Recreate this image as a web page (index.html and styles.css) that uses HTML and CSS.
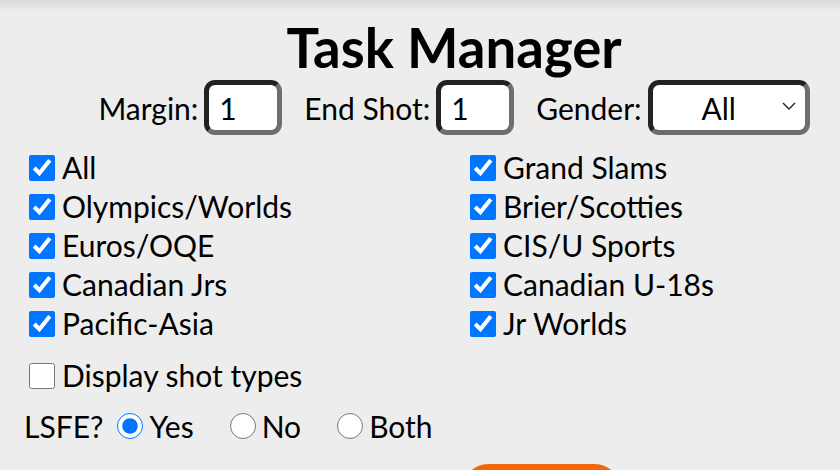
FILE: index.html
```html
<!DOCTYPE html>
<html lang="en">
<head>
<meta charset="utf-8">
<title>Task Manager</title>
<link rel="stylesheet" href="styles.css">
</head>
<body>
<main class="page">
  <header class="header">
    <h1 class="title">Task Manager</h1>
    <div class="filters">
      <label class="field">Margin:<input class="num" type="text" value="1"></label>
      <label class="field field-end">End Shot:<input class="num" type="text" value="1"></label>
      <label class="field field-gender">Gender:<span class="select-wrap"><select class="select"><option>All</option><option>Men</option><option>Women</option></select><svg class="chev" viewBox="0 0 14 8" width="14" height="8"><path d="M1 1 L7 7 L13 1" fill="none" stroke="#222" stroke-width="1.4"/></svg></span></label>
    </div>
  </header>

  <section class="events">
    <div class="col">
      <label class="check"><input type="checkbox" checked>All</label>
      <label class="check"><input type="checkbox" checked>Olympics/Worlds</label>
      <label class="check"><input type="checkbox" checked>Euros/OQE</label>
      <label class="check"><input type="checkbox" checked>Canadian Jrs</label>
      <label class="check"><input type="checkbox" checked>Pacific-Asia</label>
    </div>
    <div class="col">
      <label class="check"><input type="checkbox" checked>Grand Slams</label>
      <label class="check"><input type="checkbox" checked>Brier/Scotties</label>
      <label class="check"><input type="checkbox" checked>CIS/U Sports</label>
      <label class="check"><input type="checkbox" checked>Canadian U-18s</label>
      <label class="check"><input type="checkbox" checked>Jr Worlds</label>
    </div>
  </section>

  <div class="options">
    <label class="check"><input type="checkbox">Display shot types</label>
  </div>

  <div class="lsfe">
    <span class="lsfe-label">LSFE?</span>
    <label class="radio"><input type="radio" name="lsfe" checked>Yes</label>
    <label class="radio"><input type="radio" name="lsfe">No</label>
    <label class="radio"><input type="radio" name="lsfe">Both</label>
  </div>

  <div class="actions">
    <button class="go" type="button" aria-label="Run"></button>
  </div>
</main>
</body>
</html>
```

FILE: styles.css
```css
html, body {
  margin: 0;
  padding: 0;
}

body {
  background: #ededed linear-gradient(#dadada, #ededed) no-repeat;
  background-size: 100% 12px;
  font-family: Lato, "Noto Sans", sans-serif;
  color: #000;
  height: 470px;
  overflow: hidden;
}

.header {
  padding: 15px 0 0 68px;
  text-align: center;
}

.title {
  margin: 0;
  font-size: 54.5px;
  font-weight: 700;
  line-height: 64px;
}

.filters {
  display: flex;
  justify-content: center;
  align-items: center;
  gap: 22px;
  margin-top: 1px;
}

.field {
  display: flex;
  align-items: center;
  gap: 6px;
  font-size: 30px;
}

.num {
  box-sizing: border-box;
  width: 78px;
  height: 55px;
  border: 5px solid;
  border-color: #222 #6e6e6e #6e6e6e #222;
  border-radius: 11px;
  background: #fff;
  padding: 0 0 0 10px;
  font: 30px Lato, "Noto Sans", sans-serif;
  color: #000;
  outline: none;
}

.select-wrap {
  position: relative;
  display: inline-block;
}

.select {
  box-sizing: border-box;
  width: 162px;
  height: 55px;
  border: 5px solid;
  border-color: #222 #6e6e6e #6e6e6e #222;
  border-radius: 11px;
  background: #fff;
  appearance: none;
  -webkit-appearance: none;
  padding: 0 30px 0 10px;
  text-align: center;
  text-align-last: center;
  font: 30px Lato, "Noto Sans", sans-serif;
  color: #000;
  outline: none;
}

.chev {
  position: absolute;
  right: 14px;
  top: 22px;
  pointer-events: none;
}

.events {
  display: grid;
  grid-template-columns: 441px auto;
  padding-left: 29px;
  margin-top: 13px;
}

.col {
  display: flex;
  flex-direction: column;
}

.check {
  display: flex;
  align-items: center;
  gap: 7px;
  height: 39px;
  font-size: 30px;
  line-height: 39px;
}

.check input,
.radio input {
  width: 26px;
  height: 26px;
  margin: 0;
  flex: none;
}

.options {
  padding-left: 29px;
  margin-top: 13px;
}

.lsfe {
  display: flex;
  align-items: center;
  height: 39px;
  margin-top: 11px;
  padding-left: 24px;
  font-size: 30px;
}

.lsfe-label {
  margin-right: 14px;
}

.radio {
  display: flex;
  align-items: center;
  gap: 6px;
  margin-right: 36px;
}

.actions {
  margin-top: 19px;
  padding-left: 463px;
}

.go {
  display: block;
  width: 157px;
  height: 50px;
  border: none;
  border-radius: 25px;
  background: #f4660a;
}
```
